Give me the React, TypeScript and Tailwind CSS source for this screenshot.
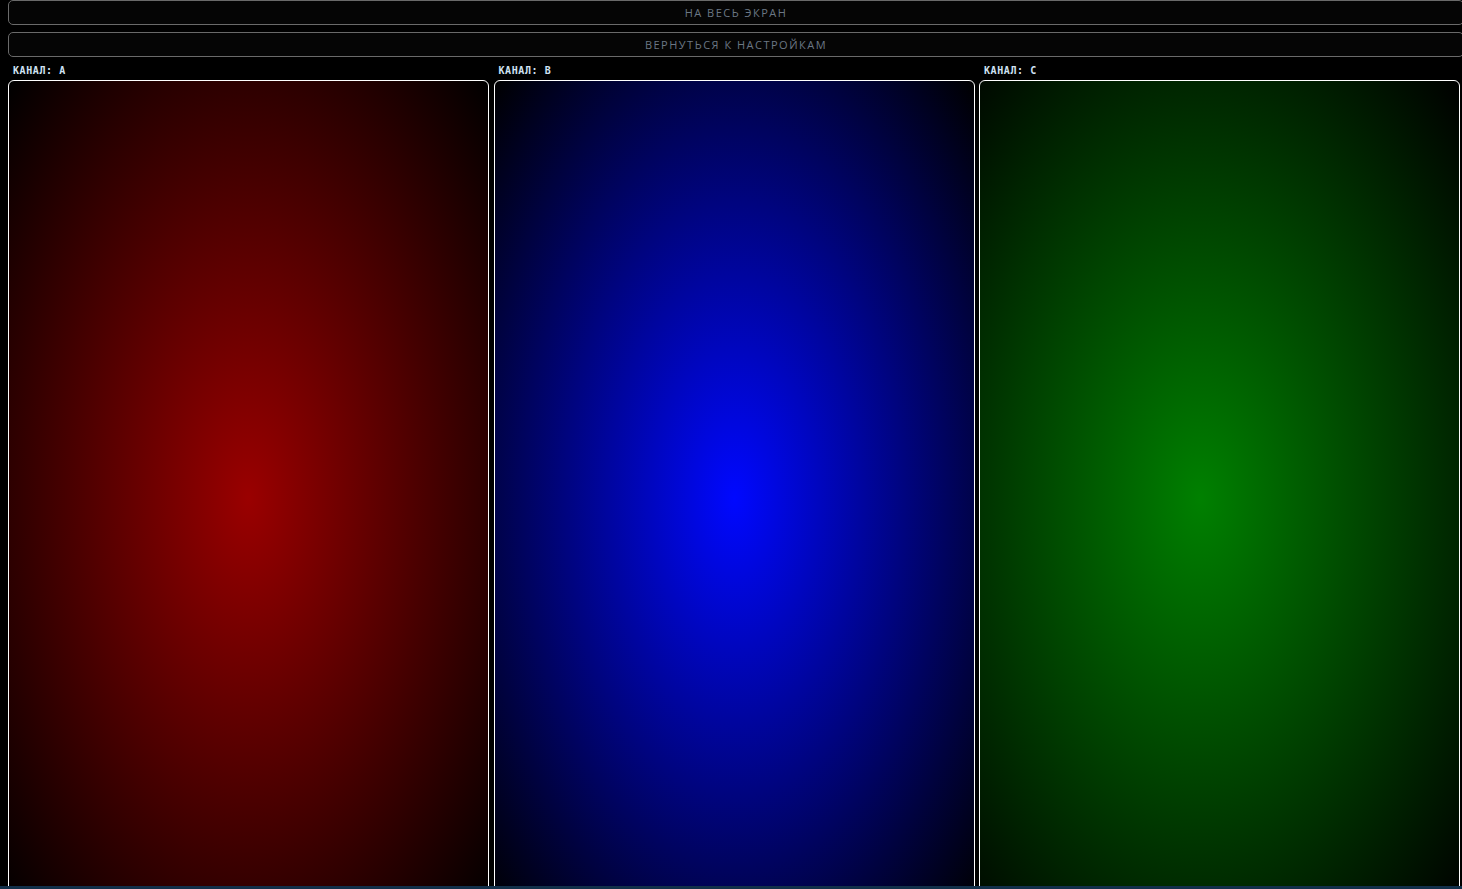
const channels = [
  { name: "A", bg: "bg-[radial-gradient(ellipse_at_50%_51%,#9a0000_0%,#000000_100%)]" },
  { name: "B", bg: "bg-[radial-gradient(ellipse_at_50%_51%,#0008ff_0%,#000000_100%)]" },
  { name: "C", bg: "bg-[radial-gradient(ellipse_at_46%_51%,#008000_0%,#000000_100%)]" },
];

const Btn = ({ children, className = "" }: { children: string; className?: string }) => (
  <button
    className={
      "ml-2 flex h-[25px] w-[1456px] shrink-0 items-center justify-center rounded-[5px] border border-[#6a6a6a] bg-[#050505] pt-[2px] text-[11px] uppercase tracking-[1.5px] text-[#6b7784] " +
      className
    }
    style={{ fontFamily: '"Open Sans", "Noto Sans", sans-serif' }}
  >
    {children}
  </button>
);

export default function App() {
  return (
    <div className="relative h-[889px] w-[1462px] overflow-hidden bg-black">
      <Btn>На весь экран</Btn>
      <Btn className="mt-[7px]">Вернуться к настройкам</Btn>

      {/* channels */}
      <div className="flex gap-[4.5px] pl-2">
        {channels.map((ch) => (
          <div key={ch.name} className="flex w-[481px] shrink-0 flex-col">
            <div
              className="h-[23px] pl-[5px] pt-[9px] text-[10px] font-bold uppercase leading-[9px] tracking-[0.6px] text-[#cfe2f3]"
              style={{ fontFamily: '"DejaVu Sans Mono", "Liberation Mono", monospace' }}
            >
              Канал: {ch.name}
            </div>
            <div className={"h-[820px] rounded-[6px] border border-white " + ch.bg} />
          </div>
        ))}
      </div>

      <div className="fixed bottom-0 left-0 h-[3px] w-full bg-[#12304a]" />
    </div>
  );
}
